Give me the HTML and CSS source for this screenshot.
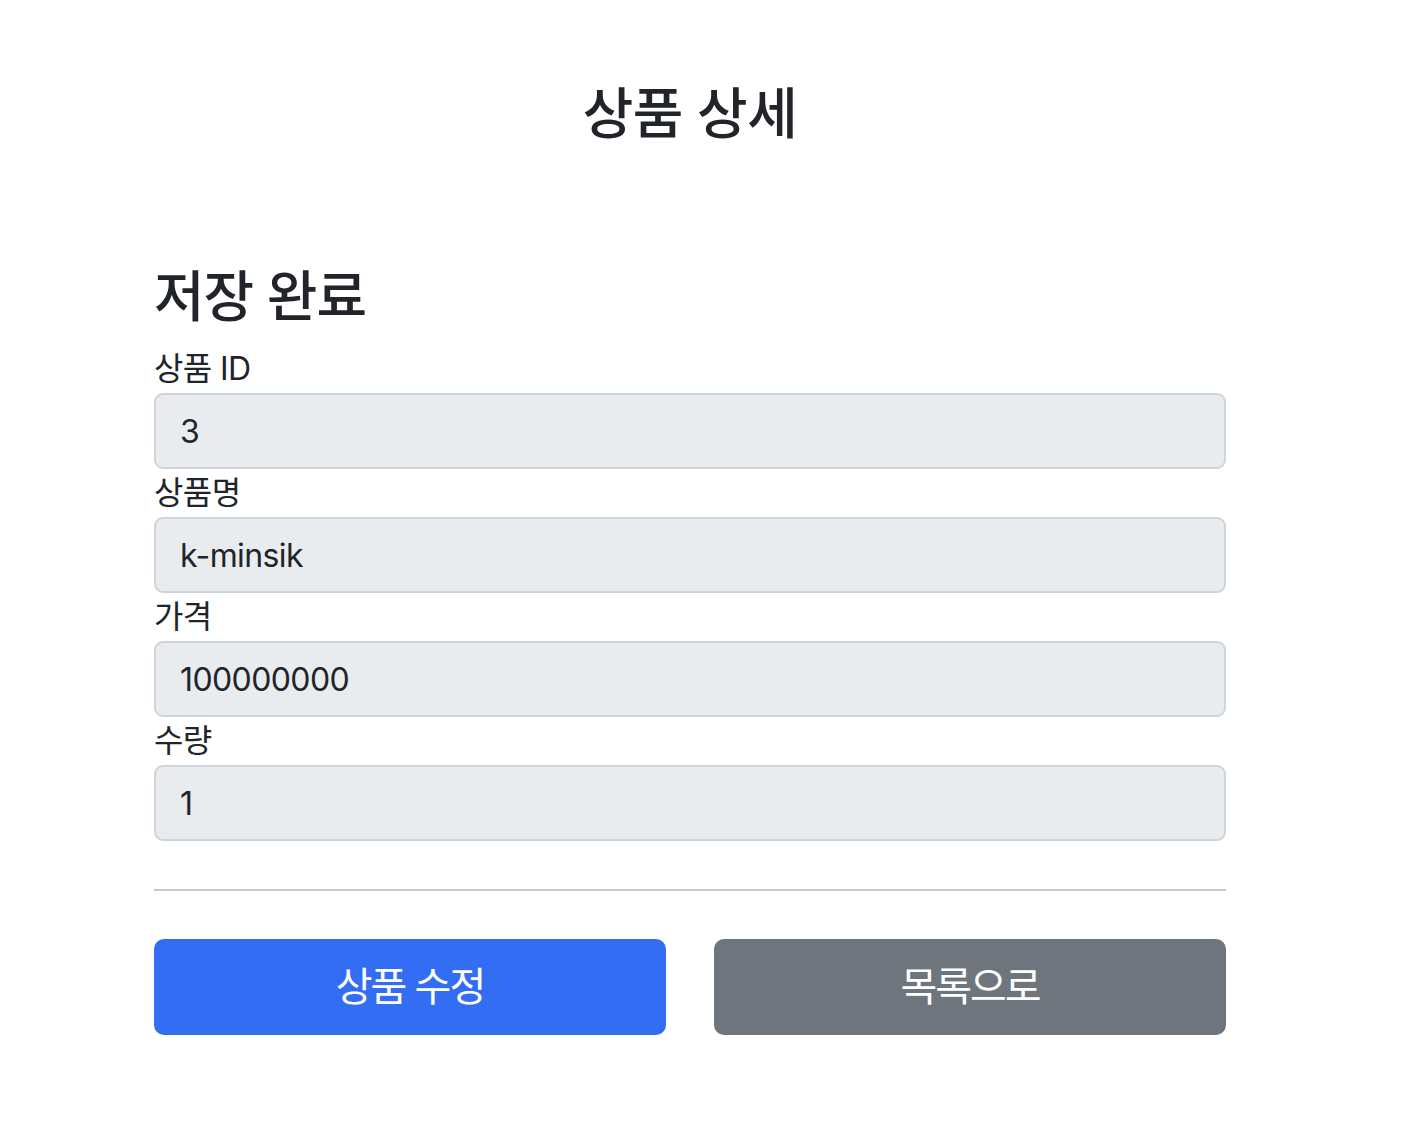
FILE: index.html
```html
<!DOCTYPE html>
<html lang="ko">
<head>
<meta charset="utf-8">
<title>상품 상세</title>
<link rel="stylesheet" href="styles.css">
</head>
<body>
<div class="container">
  <div class="page-header">
    <h2 class="title">상품 상세</h2>
  </div>

  <h2 class="status">저장 완료</h2>

  <div class="field">
    <label for="itemId">상품 ID</label>
    <input id="itemId" class="form-control" type="text" value="3" readonly>
  </div>
  <div class="field">
    <label for="itemName">상품명</label>
    <input id="itemName" class="form-control" type="text" value="k-minsik" readonly>
  </div>
  <div class="field">
    <label for="price">가격</label>
    <input id="price" class="form-control" type="text" value="100000000" readonly>
  </div>
  <div class="field">
    <label for="quantity">수량</label>
    <input id="quantity" class="form-control" type="text" value="1" readonly>
  </div>

  <hr class="divider">

  <div class="actions">
    <button class="btn btn-primary" type="button">상품 수정</button>
    <button class="btn btn-secondary" type="button">목록으로</button>
  </div>
</div>
</body>
</html>
```
FILE: styles.css
```css
* { box-sizing: border-box; }

html, body {
  margin: 0;
  padding: 0;
  background: #ffffff;
}

body {
  font-family: Inter, "Noto Sans CJK KR", "Noto Sans", sans-serif;
  font-size: 32px;
  line-height: 1.5;
  color: #212529;
  letter-spacing: -0.6px;
  padding-right: 26px;
}

.container {
  width: 1072px;
  margin: 0 auto;
}

.page-header {
  padding-top: 80px;
  padding-bottom: 101px;
  text-align: center;
}

h2 {
  font-size: 55px;
  font-weight: 500;
  line-height: 1.2;
  margin: 0 0 16px 0;
}

.title {
  margin-bottom: 16px;
  letter-spacing: -0.5px;
}

.status { letter-spacing: -1px; }

.field {
  display: flex;
  flex-direction: column;
}

label {
  display: block;
  font-size: 32px;
  line-height: 48px;
}

.form-control {
  display: block;
  width: 100%;
  height: 76px;
  padding: 12px 24px;
  font-family: inherit;
  font-size: 32px;
  line-height: 48px;
  letter-spacing: -0.6px;
  color: #212529;
  background: #e9ecef;
  border: 2px solid #ced4da;
  border-radius: 9px;
  outline: none;
  margin: 0;
}

.divider {
  margin: 48px 0;
  border: 0;
  border-top: 2px solid #c8c9ca;
  height: 0;
}

.actions {
  display: grid;
  grid-template-columns: 1fr 1fr;
  column-gap: 48px;
}

.btn {
  display: block;
  width: 100%;
  height: 96px;
  padding: 16px 32px;
  font-family: inherit;
  font-size: 40px;
  line-height: 60px;
  font-weight: 400;
  letter-spacing: -2px;
  color: #ffffff;
  border: 2px solid transparent;
  border-radius: 10px;
  text-align: center;
  cursor: pointer;
}

.btn-primary {
  background: #336df4;
  border-color: #336df4;
}

.btn-secondary {
  background: #6f757d;
  border-color: #6f757d;
}
```
